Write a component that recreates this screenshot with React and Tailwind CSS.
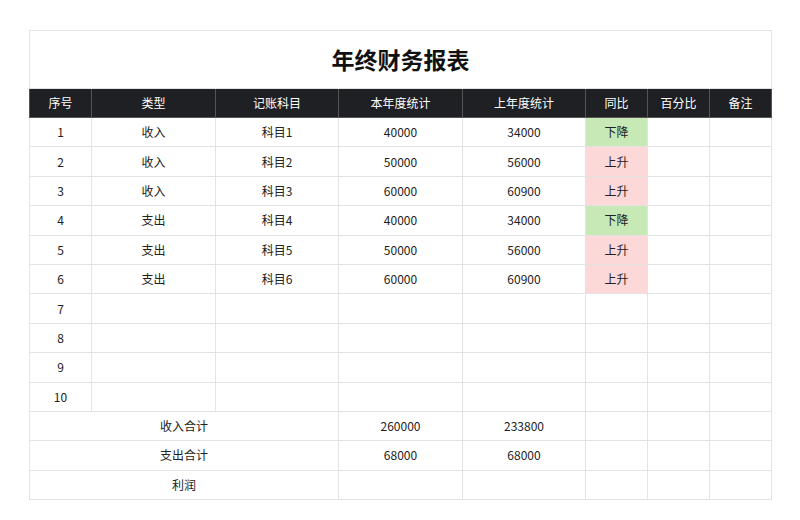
const widths = [62, 124, 123, 124, 123, 62, 62, 62];
const headers = ['序号', '类型', '记账科目', '本年度统计', '上年度统计', '同比', '百分比', '备注'];
const rows = [
  ['1', '收入', '科目1', '40000', '34000', '下降'],
  ['2', '收入', '科目2', '50000', '56000', '上升'],
  ['3', '收入', '科目3', '60000', '60900', '上升'],
  ['4', '支出', '科目4', '40000', '34000', '下降'],
  ['5', '支出', '科目5', '50000', '56000', '上升'],
  ['6', '支出', '科目6', '60000', '60900', '上升'],
  ['7'], ['8'], ['9'], ['10'],
];
const totals = [
  ['收入合计', '260000', '233800'],
  ['支出合计', '68000', '68000'],
  ['利润', '', ''],
];

const td = 'border border-[#e3e3e3] text-center h-[29.4px] p-0';

export default function App() {
  return (
    <div className="w-[800px] h-[520px] bg-white pt-[30px] pl-[29px] text-[12px] text-[#222]" style={{ fontFamily: '"Noto Sans CJK SC", "Noto Sans", sans-serif' }}>
      <table className="border-collapse table-fixed w-[742px]">
        <colgroup>
          {widths.map((w, i) => <col key={i} style={{ width: w }} />)}
        </colgroup>
        <tbody>
          <tr>
            <td colSpan={8} className="border border-[#e3e3e3] h-[58px] text-center text-[23px] font-bold text-[#111]">年终财务报表</td>
          </tr>
          <tr>
            {headers.map(h => (
              <td key={h} className="border border-[#555] bg-[#1e2023] text-white text-center h-[29px]">{h}</td>
            ))}
          </tr>
          {rows.map(r => (
            <tr key={r[0]}>
              {[0, 1, 2, 3, 4, 5, 6, 7].map(i => {
                const v = r[i] || '';
                let bg = '';
                if (i === 5 && v === '下降') bg = 'bg-[#c6e9b5]';
                if (i === 5 && v === '上升') bg = 'bg-[#fcd9d8]';
                return <td key={i} className={`${td} ${bg}`}>{v}</td>;
              })}
            </tr>
          ))}
          {totals.map(t => (
            <tr key={t[0]}>
              <td colSpan={3} className={td}>{t[0]}</td>
              <td className={td}>{t[1]}</td>
              <td className={td}>{t[2]}</td>
              <td className={td}></td>
              <td className={td}></td>
              <td className={td}></td>
            </tr>
          ))}
        </tbody>
      </table>
    </div>
  );
}
